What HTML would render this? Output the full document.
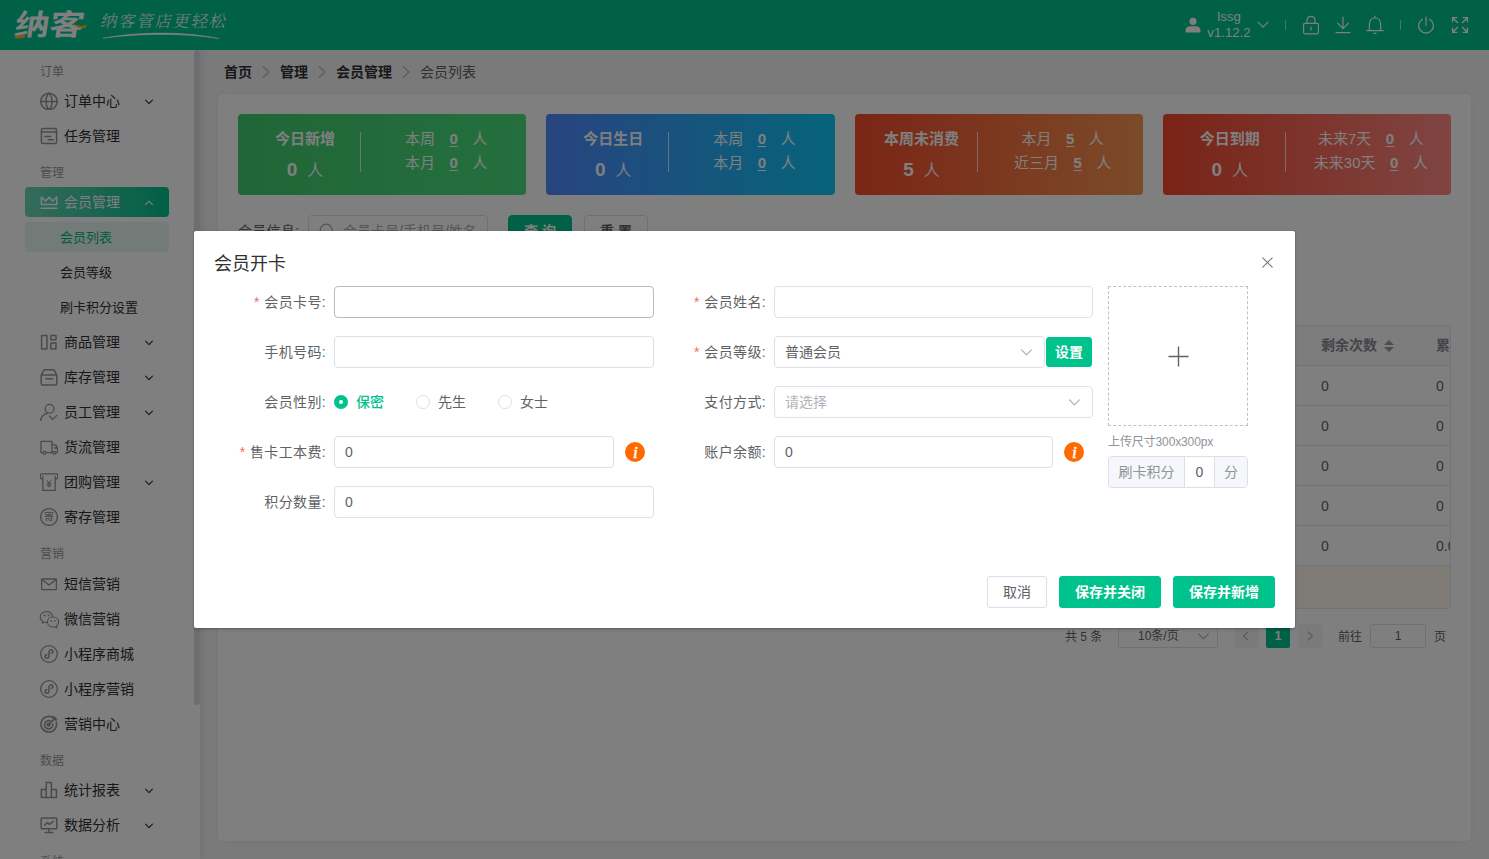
<!DOCTYPE html>
<html lang="zh-CN">
<head>
<meta charset="utf-8">
<title>会员列表 - 会员开卡</title>
<style>
*,*:before,*:after{box-sizing:border-box;margin:0;padding:0}
html,body{width:1489px;height:859px;overflow:hidden}
body{font-family:"Liberation Sans","Noto Sans CJK SC",sans-serif;font-size:14px;color:#303133;background:#f4f5f6;position:relative}
svg{display:block}
/* ---------- header ---------- */
.header{position:absolute;left:0;top:0;width:1489px;height:50px;background:#00c290;color:#fff;z-index:3}
.logo{position:absolute;left:15px;top:9px;width:60px;height:32px;font-weight:700;font-size:29px;line-height:32px;letter-spacing:0;transform-origin:0 50%;transform:scaleX(1.2) skewX(-7deg);white-space:nowrap}
.logo-gold{position:absolute;left:0;top:0}
.slogan{position:absolute;left:101px;top:9px;height:26px;line-height:26px;font-family:"Liberation Serif","Noto Serif CJK SC",serif;font-weight:300;font-size:16.5px;letter-spacing:1.6px;transform:skewX(-12deg);white-space:nowrap}
.swoosh{position:absolute;left:100px;top:30px}
.hright{position:absolute;right:0;top:0;height:50px}
.hright>*{position:absolute}
.uname{left:-290px;top:8.6px;width:60px;text-align:center;font-size:13.2px;line-height:16.5px}
/* ---------- sidebar ---------- */
.sidebar{position:absolute;left:0;top:50px;width:200px;height:809px;background:#fff;box-shadow:2px 0 9px rgba(0,0,0,.085);padding-top:5px;overflow:hidden}
.glabel{height:31px;padding:9px 0 0 40px;font-size:12px;line-height:17px;color:#999}
.mi{position:relative;height:30px;margin:0 31px 5px 25px;border-radius:4px;line-height:30px;font-size:14px;color:#303133;padding-left:39px;white-space:nowrap}
.mi svg.ic{position:absolute;left:15px;top:6px;width:18px;height:18px;fill:none;stroke:#949494;stroke-width:1.5;stroke-linecap:round;stroke-linejoin:round}
.mi svg.ar{position:absolute;left:120px;top:11.5px;width:8px;height:8px;fill:none;stroke:#303133;stroke-width:1.15;stroke-linecap:round;stroke-linejoin:round}
.mi.active{background:linear-gradient(90deg,#6ad6b6 0%,#00c08a 100%);color:#fff}
.mi.active svg.ic,.mi.active svg.ar{stroke:#fff}
.sub{height:30px;margin:0 31px 5px 25px;border-radius:4px;line-height:31px;font-size:13px;color:#303133;padding-left:35px;white-space:nowrap}
.sub.on{background:#e4f6f0;color:#00b583}
.sbar{position:absolute;left:194px;top:0;width:6px;height:654.5px;border-radius:3px;background:#dadce0}
/* ---------- main ---------- */
.crumb{position:absolute;left:224px;top:62px;height:20px;line-height:20px;font-size:14px;display:flex;align-items:center;white-space:nowrap}
.crumb b{font-weight:700;color:#303133}
.crumb span{color:#606266}
.crumb svg{width:10px;height:12px;margin:0 9px;fill:none;stroke:#b4b8c0;stroke-width:1.3;stroke-linecap:round;stroke-linejoin:round}
.card{position:absolute;left:218px;top:94px;width:1253px;height:747px;background:#fff;border-radius:5px;box-shadow:0 1px 6px rgba(0,0,0,.06)}
.stats{position:absolute;left:20px;top:20px;width:1213px;height:81px;display:flex;justify-content:space-between}
.stat{position:relative;width:288.25px;height:81px;border-radius:4px;color:#fff}
.stat .l{position:absolute;left:0;top:0;width:134px;text-align:center}
.stat .t{position:absolute;left:0;width:134px;top:13px;line-height:24px;font-size:15px;font-weight:700;text-align:center}
.stat .n{position:absolute;left:0;width:134px;top:42px;line-height:28px;font-size:16px;text-align:center;white-space:nowrap}
.stat .n b{font-size:19px;margin-right:10px;font-weight:700}
.stat .n b.z{font-size:19px}
.stat .dv{position:absolute;left:122px;top:18px;width:1px;height:40px;background:rgba(255,255,255,.75)}
.stat .r{position:absolute;left:128px;right:0;top:13px;text-align:center;font-size:15px;line-height:23.6px;white-space:nowrap}
.stat .r u{margin:0 14.5px;text-decoration:underline;text-underline-offset:2px;font-weight:700}
.s1{background:linear-gradient(90deg,#42cc6c,#49de7b)}
.s2{background:linear-gradient(90deg,#5088ff,#0cc8f4)}
.s3{background:linear-gradient(90deg,#f64b2c,#f79652)}
.s4{background:linear-gradient(90deg,#f4462c,#ff8a85)}
.search{position:absolute;left:20px;top:121px;height:32px;display:flex;align-items:center;font-size:14px}
.search label{font-weight:400;color:#606266;width:70px;position:relative;top:-1.5px;letter-spacing:.3px}
.sinput{width:180px;height:32px;border:1px solid #dcdfe6;border-radius:4px;display:flex;align-items:center;color:#a8abb2;font-size:14px;padding-left:10px;padding-bottom:3px;white-space:nowrap;overflow:hidden}
.sinput svg{width:16px;height:16px;margin-right:8px;position:relative;top:1px;fill:none;stroke:#a8abb2;stroke-width:1.2;flex:none}
.btn{height:32px;line-height:30px;border-radius:3px;border:1px solid #dcdfe6;font-size:14px;text-align:center;color:#606266;background:#fff;white-space:nowrap}
.btn.p{background:#00c28c;border-color:#00c28c;color:#fff;font-weight:700}
.search .btn{width:64px;margin-left:20px;font-weight:700;border-radius:4px}
.search .btn+.btn{margin-left:12px;color:#606266}
/* table */
.tbl{position:absolute;left:20px;top:231px;width:1213px;height:284px;border:1px solid #e4e7ed;border-radius:3px;overflow:hidden;font-size:14px;color:#606266}
.tbl .row{position:absolute;left:0;width:1400px;height:40px;border-bottom:1px solid #e4e7ed;line-height:39px}
.tbl .row span{position:absolute;top:1px;white-space:nowrap}
.tbl .hd span{top:0}
.tbl .hd{top:0;background:#fafafa;font-weight:700;color:#86898f}
.tbl .sum{position:absolute;left:0;top:240px;width:1400px;height:44px;background:#fdf6ec}
.caret{position:absolute;top:14px;width:10px;height:12px}
/* pagination */
.pg{position:absolute;top:530px;left:0;width:1253px;height:24px;font-size:12px;color:#606266;line-height:25px}
.pg>*{position:absolute;top:0;height:24px}
.pg .sel{border:1px solid #dcdfe6;border-radius:3px;line-height:23px}
.pg>span{top:.7px}
.pg .pb{width:24px;border-radius:2px;background:#f4f4f5}
.pg .pb svg,.pg .sel svg{position:absolute;fill:none;stroke:#b0b3ba;stroke-width:1.1;stroke-linecap:round;stroke-linejoin:round}
.pg .cur{width:24px;border-radius:2px;background:#00c28c;color:#fff;font-weight:700;text-align:center}
/* ---------- overlay + dialog ---------- */
.overlay{position:absolute;left:0;top:0;width:1489px;height:859px;background:rgba(0,0,0,.5);z-index:10}
.dialog{z-index:11;position:absolute;left:194px;top:231px;width:1101px;height:397px;background:#fff;border-radius:2px;box-shadow:0 1px 3px rgba(0,0,0,.3);color:#606266}
.dialog .title{position:absolute;left:20px;top:20px;font-size:18px;line-height:26px;color:#303133}
.dialog .close{position:absolute;left:1068px;top:26px;width:11px;height:11px;stroke:#73767a;stroke-width:1.1;fill:none;stroke-linecap:round}
.fi{position:absolute;height:32px;line-height:32px;font-size:14px;white-space:nowrap}
.lb{text-align:right;color:#606266;letter-spacing:.35px}
.lb i{font-style:normal;color:#f56c6c;margin-right:4.5px;font-family:"Liberation Sans",sans-serif}
.inp{border:1px solid #dcdfe6;border-radius:4px;background:#fff;padding-left:10px;line-height:30px;color:#606266}
.inp.focus{border-color:#b6bac8}
.inp svg{position:absolute;right:12px;top:11.5px;width:11px;height:7px;fill:none;stroke:#a8abb2;stroke-width:1.1;stroke-linecap:round;stroke-linejoin:round}
.ph{color:#b0b3ba}
.radio{position:absolute;height:32px;line-height:32px;font-size:14px;color:#606266;padding-left:22px;white-space:nowrap}
.radio:before{content:"";position:absolute;left:0;top:9px;width:14px;height:14px;border-radius:50%;border:1px solid #dcdfe6;background:#fff}
.radio.on{color:#00c28c;font-weight:500}
.radio.on:before{border:5px solid #00c28c;width:14px;height:14px}
.info{position:absolute;width:20px;height:20px;border-radius:50%;background:#ff6a00;color:#fff;font-family:"Liberation Serif",serif;font-style:italic;font-weight:400;font-size:17.5px;line-height:21px;text-align:center;-webkit-text-stroke:.5px #fff;padding-left:1px}
.upload{position:absolute;left:914px;top:55px;width:140px;height:140px;border:1px dashed #c0c0c0}
.upload svg{position:absolute;left:58.5px;top:58.5px;width:21px;height:21px;stroke:#606266;stroke-width:1.4;fill:none}
.tip{position:absolute;left:914px;top:202px;font-size:12px;line-height:18px;color:#909399;white-space:nowrap;letter-spacing:-.12px}
.grp{position:absolute;left:914px;top:225px;width:140px;height:32px;border:1px solid #dcdfe6;border-radius:4px;display:flex;font-size:14px;line-height:30px;color:#909399;overflow:hidden;text-align:center;white-space:nowrap}
.grp .a{width:76px;background:#f5f7fa;border-right:1px solid #dcdfe6}
.grp .m{width:29px;color:#606266}
.grp .z{flex:1;background:#f5f7fa;border-left:1px solid #dcdfe6}
.dialog .btn{position:absolute;top:345px}
</style>
</head>
<body>
<div class="header">
  <div class="logo">纳客</div>
  <svg class="logo-gold" width="100" height="50" viewBox="0 0 100 50"><path d="M15 35.5 C18 36 22 35.5 25.5 33.5 L24.5 37.5 C21 38.8 17.5 38.8 14.5 38 Z" fill="#f5b92a"/><path d="M73 23.5 C77 25.5 81 26.8 86.5 24.5 L86 27.5 C81 29.5 77 28 73 23.5 Z" fill="#f5b92a"/></svg>
  <div class="slogan">纳客管店更轻松</div>
  <svg class="swoosh" width="130" height="12" viewBox="0 0 130 12"><path d="M3 8.2 C38 1.5 84 1.2 119 8.6 C84 2.8 38 3.4 3 8.2 Z" fill="#fff" stroke="#fff" stroke-width=".5"/></svg>
  <div class="hright">
    <svg style="left:-304px;top:17px" width="16" height="16" viewBox="0 0 16 16"><circle cx="8" cy="4.3" r="3.6" fill="#fff"/><path d="M0.6 15.6 V13 C0.6 10.6 2.6 9.2 5 9.2 H11 C13.4 9.2 15.4 10.6 15.4 13 V15.6 Z" fill="#fff"/></svg>
    <div class="uname">lssg<br>v1.12.2</div>
    <svg style="left:-232px;top:21px" width="12" height="8" viewBox="0 0 12 8" fill="none" stroke="#fff" stroke-width="1.2" stroke-linecap="round" stroke-linejoin="round"><path d="M1 1.2 L6 6.2 L11 1.2"/></svg>
    <div style="left:-204px;top:20px;width:1px;height:10px;background:rgba(255,255,255,.6)"></div>
    <svg style="left:-187px;top:15px" width="18" height="20" viewBox="0 0 18 20" fill="none" stroke="#fff" stroke-width="1.2" stroke-linecap="round" stroke-linejoin="round"><rect x="1.6" y="8.4" width="14.8" height="10.4" rx="1.2"/><path d="M5 8.2 V5.4 C5 3 6.8 1.4 9 1.4 C11.2 1.4 13 3 13 5.4 V8.2"/><path d="M9 12.2 V15"/></svg>
    <svg style="left:-154px;top:16px" width="16" height="18" viewBox="0 0 16 18" fill="none" stroke="#fff" stroke-width="1.2" stroke-linecap="round" stroke-linejoin="round"><path d="M8 1 V12.4 M2.6 7.2 L8 12.6 L13.4 7.2 M1 16.6 H15"/></svg>
    <svg style="left:-123px;top:15px" width="18" height="20" viewBox="0 0 18 20" fill="none" stroke="#fff" stroke-width="1.2" stroke-linecap="round" stroke-linejoin="round"><path d="M3.4 15.4 V9 C3.4 5.4 5.8 3 9 3 C12.2 3 14.6 5.4 14.6 9 V15.4 M0.8 15.6 H17.2 M9 1.2 V2.8 M8 18.4 H10"/></svg>
    <div style="left:-89px;top:20px;width:1px;height:10px;background:rgba(255,255,255,.6)"></div>
    <svg style="left:-72px;top:16px" width="18" height="18" viewBox="0 0 18 18" fill="none" stroke="#fff" stroke-width="1.2" stroke-linecap="round" stroke-linejoin="round"><path d="M9 1 V9.4"/><path d="M5.4 3.2 A7.4 7.4 0 1 0 12.6 3.2"/></svg>
    <svg style="left:-38px;top:16px" width="18" height="18" viewBox="0 0 18 18" fill="none" stroke="#fff" stroke-width="1.4" stroke-linecap="square" stroke-linejoin="miter"><path d="M1.6 5.6 V1.6 H5.6 M2 2 L6.4 6.4 M12.4 1.6 H16.4 V5.6 M16 2 L11.6 6.4 M1.6 12.4 V16.4 H5.6 M2 16 L6.4 11.6 M12.4 16.4 H16.4 V12.4 M16 16 L11.6 11.6"/></svg>
  </div>
</div>

<div class="sidebar">
  <div class="glabel">订单</div>
  <div class="mi"><svg class="ic" viewBox="0 0 18 18"><circle cx="9" cy="9.4" r="8.2"/><path d="M0.8 9.4 H17.2 M9 1.2 C5 4.6 5 14.2 9 17.6 M9 1.2 C13 4.6 13 14.2 9 17.6"/></svg>订单中心<svg class="ar" viewBox="0 0 8 8"><path d="M0.6 2.2 L4 5.6 L7.4 2.2"/></svg></div>
  <div class="mi"><svg class="ic" viewBox="0 0 18 18"><rect x="1.4" y="1.6" width="15.2" height="15" rx="1.6"/><path d="M1.4 5 H16.6 M5 9.4 H10.6 M8.4 12.8 H13.2"/></svg>任务管理</div>
  <div class="glabel">管理</div>
  <div class="mi active"><svg class="ic" viewBox="0 0 18 18"><path d="M1.4 4 V11.4 H16.8 V4 L12.8 8 L9.1 4.2 L5.4 8 Z M1.2 15.2 H17"/></svg>会员管理<svg class="ar" viewBox="0 0 8 8"><path d="M0.6 5.6 L4 2.2 L7.4 5.6"/></svg></div>
  <div class="sub on">会员列表</div>
  <div class="sub">会员等级</div>
  <div class="sub">刷卡积分设置</div>
  <div class="mi"><svg class="ic" viewBox="0 0 18 18"><rect x="1.6" y="2.4" width="5.4" height="13.6" rx=".4"/><rect x="10.8" y="2.4" width="5.2" height="4.4" rx=".4"/><rect x="10.8" y="10" width="5.2" height="6" rx=".4"/></svg>商品管理<svg class="ar" viewBox="0 0 8 8"><path d="M0.6 2.2 L4 5.6 L7.4 2.2"/></svg></div>
  <div class="mi"><svg class="ic" viewBox="0 0 18 18"><path d="M1.2 7 L4 1.8 H14 L16.8 7 M1.2 7 H16.8 V15.4 C16.8 16.3 16.1 17 15.2 17 H2.8 C1.9 17 1.2 16.3 1.2 15.4 Z M6 10.8 H12.4"/></svg>库存管理<svg class="ar" viewBox="0 0 8 8"><path d="M0.6 2.2 L4 5.6 L7.4 2.2"/></svg></div>
  <div class="mi"><svg class="ic" viewBox="0 0 18 18" style="stroke-width:1.3"><circle cx="9.6" cy="5.8" r="4.4"/><path d="M0.6 18 C1 14 3.6 11.2 7.2 10.4 M9.6 13 L12.6 16.6 L16.8 12.4"/></svg>员工管理<svg class="ar" viewBox="0 0 8 8"><path d="M0.6 2.2 L4 5.6 L7.4 2.2"/></svg></div>
  <div class="mi"><svg class="ic" viewBox="0 0 18 18" style="stroke-width:1.3"><path d="M1 3.4 H12 V14.6 H1 Z M12 6.8 H15.6 L17.4 9.8 V14.6 H12 M14.4 10 H17"/><circle cx="4.4" cy="14.8" r="1.5" fill="#fff"/><circle cx="14.2" cy="14.8" r="1.5" fill="#fff"/></svg>货流管理</div>
  <div class="mi"><svg class="ic" viewBox="0 0 18 18" style="stroke-width:1.3"><path d="M2.6 5.8 H1.8 C1 5.8 0.4 5.2 0.4 4.4 V2.2 C0.4 1.4 1 0.8 1.8 0.8 H16.2 C17 0.8 17.6 1.4 17.6 2.2 V4.4 C17.6 5.2 17 5.8 16.2 5.8 H15.4 M2.8 3.4 V17.4 H15.2 V3.4"/><path d="M7 7.4 L9 10.2 L11 7.4 M9 10.2 V14.4 M7 10.6 H11 M7 12.4 H11" stroke-width="1"/></svg>团购管理<svg class="ar" viewBox="0 0 8 8"><path d="M0.6 2.2 L4 5.6 L7.4 2.2"/></svg></div>
  <div class="mi"><svg class="ic" viewBox="0 0 18 18" style="stroke-width:1.3"><circle cx="9" cy="9" r="8.4"/><text x="9" y="12.3" text-anchor="middle" font-size="9.5" font-weight="700" stroke="none" fill="#a0a0a0" font-family="Liberation Sans,Noto Sans CJK SC,sans-serif">寄</text></svg>寄存管理</div>
  <div class="glabel" style="height:31.5px">营销</div>
  <div class="mi"><svg class="ic" viewBox="0 0 18 18" style="stroke-width:1.3"><rect x="1.6" y="4" width="14.8" height="10.6" rx=".6"/><path d="M1.8 4.6 L9 10 L16.2 4.6"/></svg>短信营销</div>
  <div class="mi"><svg class="ic" viewBox="0 0 18 18" style="stroke-width:1.15;overflow:visible"><path d="M12.6 6.6 C12.2 3.6 9.6 1.6 6.6 1.6 C3 1.6 0.2 4 0.2 7 C0.2 8.8 1.2 10.4 2.8 11.4 L2.2 13.2 L4.6 12 C5.2 12.2 5.8 12.3 6.6 12.3"/><path d="M18.6 12 C18.6 9.2 16.2 7 13 7 C9.8 7 7.4 9.2 7.4 12 C7.4 14.8 9.8 17 13 17 C13.8 17 14.4 16.9 15 16.7 L16.9 17.8 L16.5 16 C17.8 15 18.6 13.6 18.6 12 Z"/><circle cx="4.6" cy="5.4" r=".4"/><circle cx="8.6" cy="5.4" r=".4"/><circle cx="11.2" cy="10.8" r=".35"/><circle cx="14.8" cy="10.8" r=".35"/></svg>微信营销</div>
  <div class="mi"><svg class="ic" viewBox="0 0 18 18" style="stroke-width:1.3"><circle cx="9" cy="9" r="8.3"/><path d="M11.2 8.3 C12.8 8.3 13.5 6.6 12.5 5.4 C11.4 4.1 9 4.8 9 6.8 V11.2 C9 13.2 6.6 13.9 5.5 12.6 C4.5 11.4 5.2 9.7 6.8 9.7" stroke-width="1.5"/></svg>小程序商城</div>
  <div class="mi"><svg class="ic" viewBox="0 0 18 18" style="stroke-width:1.3"><circle cx="9" cy="9" r="8.3"/><path d="M11.2 8.3 C12.8 8.3 13.5 6.6 12.5 5.4 C11.4 4.1 9 4.8 9 6.8 V11.2 C9 13.2 6.6 13.9 5.5 12.6 C4.5 11.4 5.2 9.7 6.8 9.7" stroke-width="1.5"/></svg>小程序营销</div>
  <div class="mi"><svg class="ic" viewBox="0 0 18 18" style="stroke-width:1.6"><path d="M13.4 3 A7.8 7.8 0 1 0 16.2 7"/><path d="M11 6.2 A4.2 4.2 0 1 0 12.8 9"/><circle cx="8.6" cy="9.6" r="1.4" fill="#a6a6a6"/><path d="M9 9.2 L15.6 2.6 M13.4 1.6 L13.8 4.4 L16.6 4.8"/></svg>营销中心</div>
  <div class="glabel" style="height:31.5px">数据</div>
  <div class="mi"><svg class="ic" viewBox="0 0 18 18"><path d="M1.4 16.6 V8.4 H6.2 M6.2 16.6 V1.6 H11.4 V16.6 M11.4 8.4 H16.4 V16.6 M1.4 16.6 H16.6"/></svg>统计报表<svg class="ar" viewBox="0 0 8 8"><path d="M0.6 2.2 L4 5.6 L7.4 2.2"/></svg></div>
  <div class="mi"><svg class="ic" viewBox="0 0 18 18"><rect x="1.2" y="2" width="15.6" height="10.8" rx=".8"/><path d="M9 12.8 V16.2 M5 16.4 H13 M4.6 9.2 L7.4 6.6 L9.6 8.4 L13.4 5.2"/></svg>数据分析<svg class="ar" viewBox="0 0 8 8"><path d="M0.6 2.2 L4 5.6 L7.4 2.2"/></svg></div>
  <div class="glabel">系统</div>
  <div class="sbar"></div>
</div>

<div class="crumb"><b>首页</b><svg viewBox="0 0 10 12"><path d="M2.4 0.8 L8 6 L2.4 11.2"/></svg><b>管理</b><svg viewBox="0 0 10 12"><path d="M2.4 0.8 L8 6 L2.4 11.2"/></svg><b>会员管理</b><svg viewBox="0 0 10 12"><path d="M2.4 0.8 L8 6 L2.4 11.2"/></svg><span>会员列表</span></div>
<div class="card">
  <div class="stats">
    <div class="stat s1"><div class="t">今日新增</div><div class="n"><b class="z">0</b>人</div><div class="dv"></div><div class="r">本周<u>0</u>人<br>本月<u>0</u>人</div></div>
    <div class="stat s2"><div class="t">今日生日</div><div class="n"><b class="z">0</b>人</div><div class="dv"></div><div class="r">本周<u>0</u>人<br>本月<u>0</u>人</div></div>
    <div class="stat s3"><div class="t">本周未消费</div><div class="n"><b>5</b>人</div><div class="dv"></div><div class="r">本月<u>5</u>人<br>近三月<u>5</u>人</div></div>
    <div class="stat s4"><div class="t">今日到期</div><div class="n"><b class="z">0</b>人</div><div class="dv"></div><div class="r">未来7天<u>0</u>人<br>未来30天<u>0</u>人</div></div>
  </div>
  <div class="search">
    <label>会员信息:</label>
    <div class="sinput"><svg viewBox="0 0 16 16"><circle cx="7.2" cy="7.2" r="6"/><path d="M11.6 11.6 L15 15"/></svg>会员卡号/手机号/姓名</div>
    <div class="btn p">查 询</div>
    <div class="btn">重 置</div>
  </div>
  <div class="tbl">
    <div class="row hd"><span style="left:1082px">剩余次数</span><svg class="caret" style="left:1145px" viewBox="0 0 10 12"><path d="M5 0 L10 5 H0 Z M5 12 L10 7 H0 Z" fill="#9a9da3"/></svg><span style="left:1197px">累计消费</span></div>
    <div class="row" style="top:40px"><span style="left:1082px">0</span><span style="left:1197px">0</span></div>
    <div class="row" style="top:80px"><span style="left:1082px">0</span><span style="left:1197px">0</span></div>
    <div class="row" style="top:120px"><span style="left:1082px">0</span><span style="left:1197px">0</span></div>
    <div class="row" style="top:160px"><span style="left:1082px">0</span><span style="left:1197px">0</span></div>
    <div class="row" style="top:200px"><span style="left:1082px">0</span><span style="left:1197px">0.00</span></div>
    <div class="sum"></div>
  </div>
  <div class="pg">
    <span style="left:847px">共 5 条</span>
    <div class="sel" style="left:900px;width:100px"><span style="position:absolute;left:19px;top:0">10条/页</span><svg style="right:8px;top:8px" width="11" height="7" viewBox="0 0 11 7"><path d="M0.6 0.8 L5.5 5.8 L10.4 0.8"/></svg></div>
    <div class="pb" style="left:1016px"><svg style="left:8px;top:7px" width="8" height="10" viewBox="0 0 8 10"><path d="M6 0.8 L1.6 5 L6 9.2"/></svg></div>
    <div class="cur" style="left:1048px">1</div>
    <div class="pb" style="left:1080px"><svg style="left:8px;top:7px" width="8" height="10" viewBox="0 0 8 10"><path d="M2 0.8 L6.4 5 L2 9.2"/></svg></div>
    <span style="left:1120px">前往</span>
    <div class="sel" style="left:1152px;width:56px;text-align:center">1</div>
    <span style="left:1216px">页</span>
  </div>
</div>

<div class="overlay"></div>
<div class="dialog">
  <div class="title">会员开卡</div>
  <svg class="close" viewBox="0 0 11 11"><path d="M0.8 0.8 L10.2 10.2 M10.2 0.8 L0.8 10.2"/></svg>

  <div class="fi lb" style="left:0;top:55px;width:132px"><i>*</i>会员卡号:</div>
  <div class="fi inp focus" style="left:140px;top:55px;width:320px"></div>
  <div class="fi lb" style="left:0;top:105px;width:132px">手机号码:</div>
  <div class="fi inp" style="left:140px;top:105px;width:320px"></div>
  <div class="fi lb" style="left:0;top:155px;width:132px">会员性别:</div>
  <div class="radio on" style="left:140px;top:155px">保密</div>
  <div class="radio" style="left:222px;top:155px">先生</div>
  <div class="radio" style="left:304px;top:155px">女士</div>
  <div class="fi lb" style="left:0;top:205px;width:132px"><i>*</i>售卡工本费:</div>
  <div class="fi inp" style="left:140px;top:205px;width:280px">0</div>
  <div class="info" style="left:431px;top:211px">i</div>
  <div class="fi lb" style="left:0;top:255px;width:132px">积分数量:</div>
  <div class="fi inp" style="left:140px;top:255px;width:320px">0</div>

  <div class="fi lb" style="left:440px;top:55px;width:132px"><i>*</i>会员姓名:</div>
  <div class="fi inp" style="left:580px;top:55px;width:319px"></div>
  <div class="fi lb" style="left:440px;top:105px;width:132px"><i>*</i>会员等级:</div>
  <div class="fi inp" style="left:580px;top:105px;width:271px">普通会员<svg viewBox="0 0 11 7"><path d="M0.6 0.8 L5.5 5.8 L10.4 0.8"/></svg></div>
  <div class="btn p" style="left:852px;top:106px;width:46px;height:30px;line-height:28px">设置</div>
  <div class="fi lb" style="left:440px;top:155px;width:132px">支付方式:</div>
  <div class="fi inp" style="left:580px;top:155px;width:319px"><span class="ph">请选择</span><svg viewBox="0 0 11 7"><path d="M0.6 0.8 L5.5 5.8 L10.4 0.8"/></svg></div>
  <div class="fi lb" style="left:440px;top:205px;width:132px">账户余额:</div>
  <div class="fi inp" style="left:580px;top:205px;width:279px">0</div>
  <div class="info" style="left:870px;top:211px">i</div>

  <div class="upload"><svg viewBox="0 0 21 21"><path d="M10.5 0.5 V20.5 M0.5 10.5 H20.5"/></svg></div>
  <div class="tip">上传尺寸300x300px</div>
  <div class="grp"><div class="a">刷卡积分</div><div class="m">0</div><div class="z">分</div></div>

  <div class="btn" style="left:793px;width:60px">取消</div>
  <div class="btn p" style="left:865px;width:102px">保存并关闭</div>
  <div class="btn p" style="left:979px;width:102px">保存并新增</div>
</div>

</body>
</html>
